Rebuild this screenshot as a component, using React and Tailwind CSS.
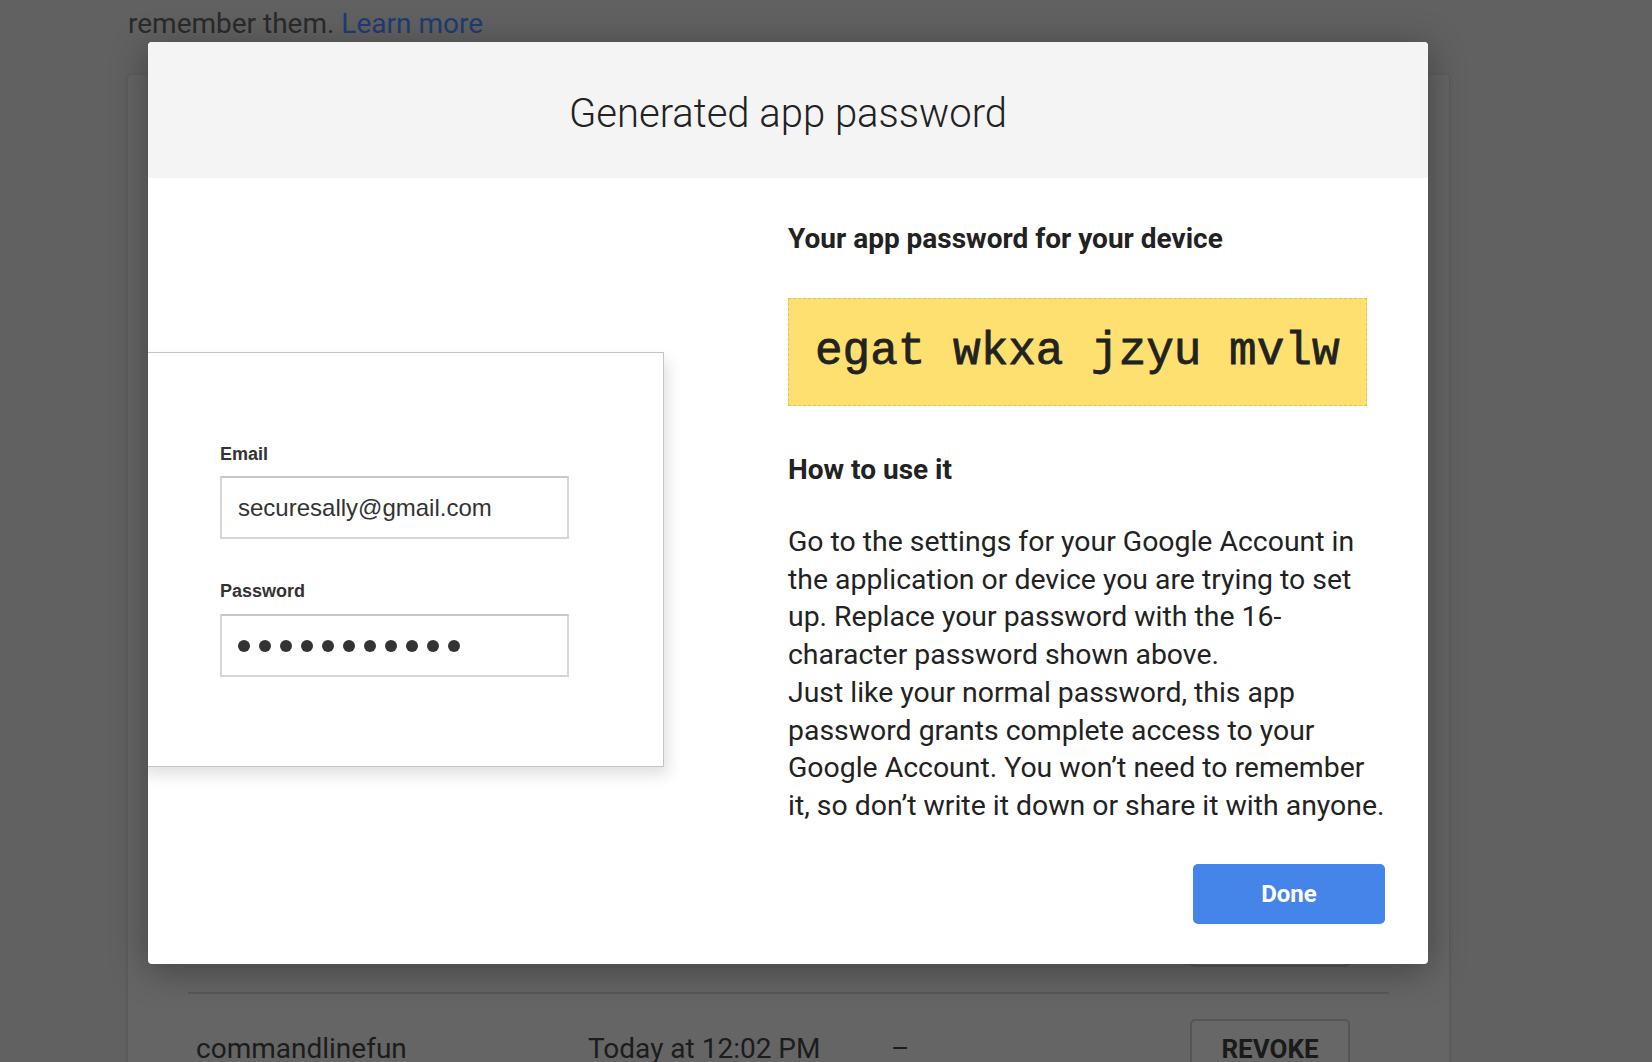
import React from "react";

const dots = Array.from({ length: 11 });

const Row = ({ name, date, hidden }) => (
    <div className={`flex items-center py-[25px] ${hidden ? 'border-b-2 border-[#585858]' : ''}`}>
        <p className="w-[400px] pl-[8px] text-[28px] text-[#1c1c1c]">{name}</p>
        <p className="w-[303px] text-[28px] text-[#1c1c1c]">{date}</p>
        <p className="flex-1 text-[28px] text-[#1c1c1c]">–</p>
        <button className="mr-[39px] h-[60px] w-[160px] rounded-[5px] border-2 border-[#555] bg-[#676767] text-[26px] font-bold text-[#1a1a1a]">REVOKE</button>
    </div>
)

const LoginCard = () => (
    <div className="mt-[174px] -ml-[10px] w-[526px] h-[415px] border border-[#c4c4c4] bg-white pl-[81px] pt-[91px] shadow-[4px_8px_14px_rgba(0,0,0,0.12)] font-['Liberation_Sans',Arial,sans-serif]">
        <p className="text-[18px] leading-[20px] font-bold text-[#333]">Email</p>
        <div className="mt-[12px] flex h-[63px] w-[349px] items-center border-2 border-[#d6d6d6] border-t-[#c8c8c8] pl-[16px] text-[24px] text-[#333]">
            securesally@gmail.com
        </div>
        <p className="mt-[42px] text-[18px] leading-[20px] font-bold text-[#333]">Password</p>
        <div className="mt-[13px] flex h-[63px] w-[349px] items-center gap-[9px] border-2 border-[#d6d6d6] border-t-[#c8c8c8] pl-[16px]">
            {dots.map((_, i) => <span key={i} className="h-[12px] w-[12px] rounded-full bg-[#333]"></span>)}
        </div>
    </div>
)

export default function App() {
    return (
        <div className="relative w-[1652px] h-[1062px] overflow-hidden bg-[#616161] font-['Roboto',sans-serif]">
            {/* page behind the dialog */}
            <div className="-mt-[33px] pl-[128px] text-[28px] leading-[36px] text-[#2a2a2a]">
                <p className="whitespace-nowrap">App passwords let you sign in from apps on devices that don't support 2-Step Verification. You only need to</p>
                <p className="mt-[3px]">remember them. <a className="text-[#1f3c70]">Learn more</a></p>
            </div>
            <div className="mt-[33px] ml-[128px] w-[1321px] rounded-[4px] bg-[#656565] px-[60px] pt-[807px] shadow-[0_1px_4px_rgba(0,0,0,0.15)]">
                <Row name="Mail on my Mac" date="Today at 12:01 PM" hidden />
                <Row name="commandlinefun" date="Today at 12:02 PM" />
            </div>

            {/* dialog */}
            <div className="absolute left-[148px] top-[42px] flex h-[922px] w-[1280px] flex-col overflow-hidden rounded-[4px] bg-white shadow-[0_6px_36px_rgba(0,0,0,0.35)]">
                <div className="flex h-[136px] items-center justify-center bg-[#f4f4f4] pt-[8px]">
                    <h1 className="text-[40px] font-light text-[#222]">Generated app password</h1>
                </div>
                <div className="flex flex-1">
                    <div className="w-[640px]">
                        <LoginCard />
                    </div>
                    <div className="flex flex-1 flex-col pt-[46px] pr-[36px] text-[#222]">
                        <h2 className="text-[28px] leading-[30px] font-bold">Your app password for your device</h2>
                        <div className="mt-[44px] flex h-[108px] w-fit items-center border border-dashed border-[#e3c45a] bg-[#fde06f] px-[26px]">
                            <span className="font-['Liberation_Mono','Courier_New',monospace] text-[46px] text-[#222] [-webkit-text-stroke:0.8px_#222]">egat wkxa jzyu mvlw</span>
                        </div>
                        <h2 className="mt-[49px] text-[28px] leading-[30px] font-bold">How to use it</h2>
                        <div className="mt-[38px] text-[28.4px] leading-[37.7px]">
                            <p>Go to the settings for your Google Account in the application or device you are trying to set up. Replace your password with the 16-character password shown above.</p>
                            <p>Just like your normal password, this app password grants complete access to your Google Account. You won’t need to remember it, so don’t write it down or share it with anyone.</p>
                        </div>
                        <div className="mt-auto mb-[40px] flex justify-end">
                            <button className="mr-[7px] h-[60px] w-[192px] rounded-[5px] bg-[#4584e9] text-[24px] font-bold text-white">Done</button>
                        </div>
                    </div>
                </div>
            </div>
        </div>
    )
}
